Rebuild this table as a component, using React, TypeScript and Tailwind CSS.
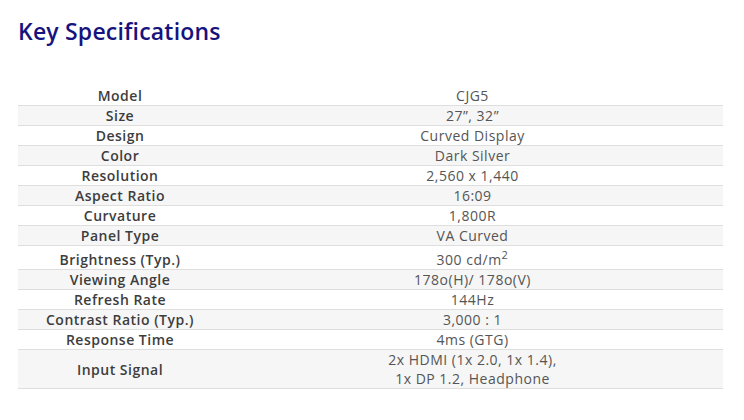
import React from 'react';

type Spec = { label: string; value: React.ReactNode; tall?: 'sup' | 'two' };

const specs: Spec[] = [
  { label: 'Model', value: 'CJG5' },
  { label: 'Size', value: '27”, 32”' },
  { label: 'Design', value: 'Curved Display' },
  { label: 'Color', value: 'Dark Silver' },
  { label: 'Resolution', value: '2,560 x 1,440' },
  { label: 'Aspect Ratio', value: '16:09' },
  { label: 'Curvature', value: '1,800R' },
  { label: 'Panel Type', value: 'VA Curved' },
  {
    label: 'Brightness (Typ.)',
    value: (
      <>
        300 cd/m<sup className="text-[11px] -top-[6px]">2</sup>
      </>
    ),
    tall: 'sup',
  },
  { label: 'Viewing Angle', value: '178o(H)/ 178o(V)' },
  { label: 'Refresh Rate', value: '144Hz' },
  { label: 'Contrast Ratio (Typ.)', value: '3,000 : 1' },
  { label: 'Response Time', value: '4ms (GTG)' },
  {
    label: 'Input Signal',
    value: (
      <>
        2x HDMI (1x 2.0, 1x 1.4),
        <br />
        1x DP 1.2, Headphone
      </>
    ),
    tall: 'two',
  },
];

export default function App() {
  return (
    <div className="w-[744px] h-[420px] bg-white px-[18px] pt-[16px] font-['Open_Sans',sans-serif]">
      <h1 className="text-[23px] leading-[30px] font-semibold text-[#16137e] tracking-[0.2px]">
        Key Specifications
      </h1>

      <div className="mt-[40px] w-[705px] text-[14px] tracking-[0.5px]">
        {specs.map((s, i) => (
          <div
            key={s.label}
            className={
              'grid grid-cols-[204px_1fr] items-center border-b border-[#dedede] ' +
              (i % 2 === 1 ? 'bg-[#f6f6f6] ' : 'bg-white ') +
              (s.tall === 'sup' ? 'h-[24px] pt-[3px]' : s.tall === 'two' ? 'h-[39px]' : 'h-[20px]')
            }
          >
            <div className="text-center font-semibold leading-[19px] text-[#3d3d3d]">{s.label}</div>
            <div className="text-center leading-[19px] text-[#555]">{s.value}</div>
          </div>
        ))}
      </div>
    </div>
  );
}
